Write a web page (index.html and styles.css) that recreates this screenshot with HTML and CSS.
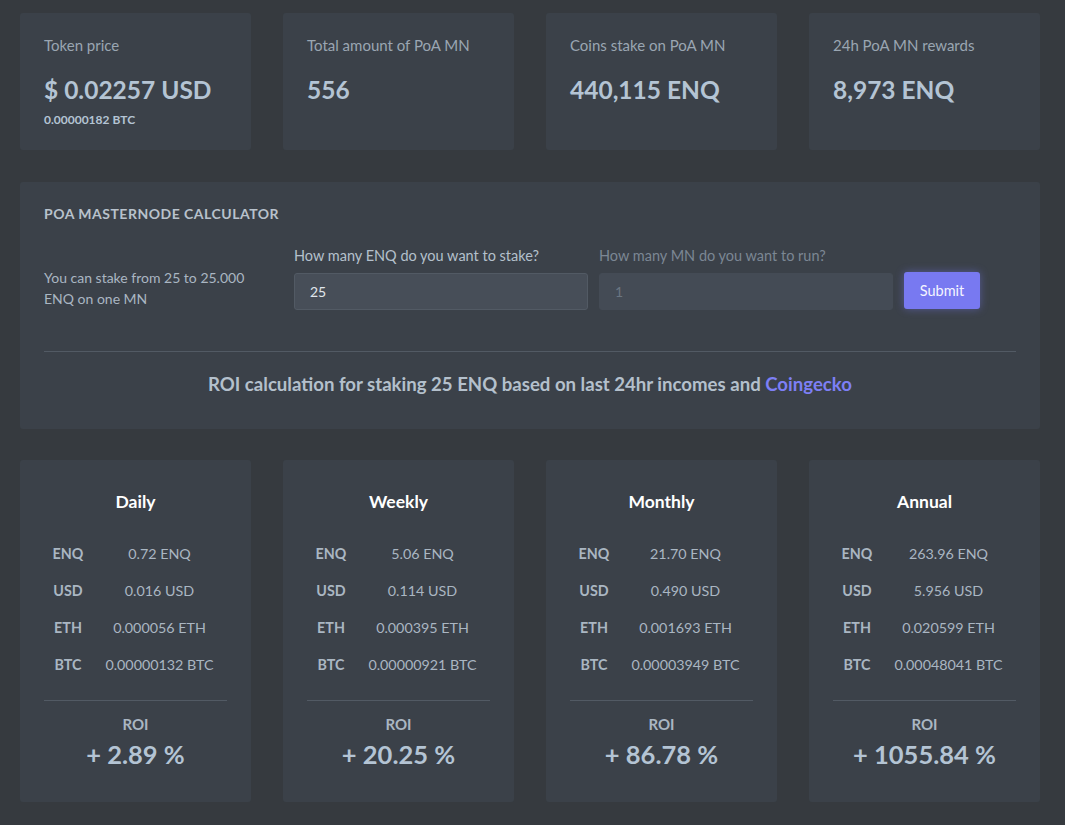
FILE: index.html
```html
<!DOCTYPE html>
<html>
<head>
<meta charset="utf-8">
<link rel="stylesheet" href="styles.css">
</head>
<body>
<div class="wrap">
  <div class="grid4 stats">
    <div class="card stat">
      <div class="stat-label">Token price</div>
      <div class="stat-value">$ 0.02257 USD</div>
      <div class="stat-sub">0.00000182 BTC</div>
    </div>
    <div class="card stat">
      <div class="stat-label">Total amount of PoA MN</div>
      <div class="stat-value">556</div>
    </div>
    <div class="card stat">
      <div class="stat-label">Coins stake on PoA MN</div>
      <div class="stat-value">440,115 ENQ</div>
    </div>
    <div class="card stat">
      <div class="stat-label">24h PoA MN rewards</div>
      <div class="stat-value">8,973 ENQ</div>
    </div>
  </div>

  <div class="card calc">
    <div class="calc-title">POA MASTERNODE CALCULATOR</div>
    <div class="calc-row">
      <div class="calc-note">You can stake from 25 to 25.000 ENQ on one MN</div>
      <div class="field">
        <label class="field-label">How many ENQ do you want to stake?</label>
        <div class="input">25</div>
      </div>
      <div class="field">
        <label class="field-label disabled">How many MN do you want to run?</label>
        <div class="input disabled">1</div>
      </div>
      <button class="btn">Submit</button>
    </div>
    <div class="hr"></div>
    <div class="calc-roi">ROI calculation for staking 25 ENQ based on last 24hr incomes and <a class="link">Coingecko</a></div>
  </div>

  <div class="grid4 periods">
    <div class="card period">
      <div class="period-title">Daily</div>
      <div class="rows">
        <div class="row"><span class="k">ENQ</span><span class="v">0.72 ENQ</span></div>
        <div class="row"><span class="k">USD</span><span class="v">0.016 USD</span></div>
        <div class="row"><span class="k">ETH</span><span class="v">0.000056 ETH</span></div>
        <div class="row"><span class="k">BTC</span><span class="v">0.00000132 BTC</span></div>
      </div>
      <div class="hr"></div>
      <div class="roi-label">ROI</div>
      <div class="roi-value">+ 2.89 %</div>
    </div>
    <div class="card period">
      <div class="period-title">Weekly</div>
      <div class="rows">
        <div class="row"><span class="k">ENQ</span><span class="v">5.06 ENQ</span></div>
        <div class="row"><span class="k">USD</span><span class="v">0.114 USD</span></div>
        <div class="row"><span class="k">ETH</span><span class="v">0.000395 ETH</span></div>
        <div class="row"><span class="k">BTC</span><span class="v">0.00000921 BTC</span></div>
      </div>
      <div class="hr"></div>
      <div class="roi-label">ROI</div>
      <div class="roi-value">+ 20.25 %</div>
    </div>
    <div class="card period">
      <div class="period-title">Monthly</div>
      <div class="rows">
        <div class="row"><span class="k">ENQ</span><span class="v">21.70 ENQ</span></div>
        <div class="row"><span class="k">USD</span><span class="v">0.490 USD</span></div>
        <div class="row"><span class="k">ETH</span><span class="v">0.001693 ETH</span></div>
        <div class="row"><span class="k">BTC</span><span class="v">0.00003949 BTC</span></div>
      </div>
      <div class="hr"></div>
      <div class="roi-label">ROI</div>
      <div class="roi-value">+ 86.78 %</div>
    </div>
    <div class="card period">
      <div class="period-title">Annual</div>
      <div class="rows">
        <div class="row"><span class="k">ENQ</span><span class="v">263.96 ENQ</span></div>
        <div class="row"><span class="k">USD</span><span class="v">5.956 USD</span></div>
        <div class="row"><span class="k">ETH</span><span class="v">0.020599 ETH</span></div>
        <div class="row"><span class="k">BTC</span><span class="v">0.00048041 BTC</span></div>
      </div>
      <div class="hr"></div>
      <div class="roi-label">ROI</div>
      <div class="roi-value">+ 1055.84 %</div>
    </div>
  </div>
</div>
</body>
</html>
```

FILE: styles.css
```css
* { box-sizing: border-box; }
html, body { margin: 0; padding: 0; }
body {
  background: #363a3f;
  font-family: Lato, "Noto Sans", sans-serif;
  color: #b8c4d0;
  width: 1065px;
  height: 825px;
  overflow: hidden;
}
.wrap {
  padding: 13px 25px 0 20px;
  display: flex;
  flex-direction: column;
  gap: 32px;
}
.grid4 {
  display: grid;
  grid-template-columns: repeat(4, 1fr);
  gap: 32px;
}
.card {
  background: #3b4149;
  border-radius: 3px;
}
.stat {
  height: 137px;
  padding: 23px 24px;
}
.stat-label {
  font-size: 15px;
  color: #9aa6b2;
  line-height: 18px;
}
.stat-value {
  margin-top: 21px;
  font-size: 24.5px;
  font-weight: 700;
  color: #b4c4d4;
  line-height: 29px;
}
.stat-sub {
  margin-top: 8px;
  font-size: 12px;
  font-weight: 700;
  color: #b4c4d4;
}
.calc {
  height: 247px;
  padding: 23px 24px 0 24px;
  display: flex;
  flex-direction: column;
}
.calc-title {
  font-size: 14px;
  font-weight: 700;
  color: #b8c2cc;
  letter-spacing: 0.5px;
}
.calc-row {
  margin-top: 25px;
  display: flex;
  align-items: flex-end;
  gap: 11px;
}
.calc-note {
  width: 239px;
  padding-right: 10px;
  font-size: 14px;
  line-height: 21px;
  color: #aab6c2;
  padding-bottom: 1px;
}
.field {
  width: 294px;
  display: flex;
  flex-direction: column;
  gap: 9px;
}
.field-label {
  font-size: 14.5px;
  color: #b4c0cc;
  line-height: 17px;
}
.field-label.disabled { color: #7b8794; }
.input {
  height: 37px;
  background: #474e58;
  border: 1px solid #525a64;
  border-radius: 3px;
  font-size: 14px;
  color: #e0e6ec;
  padding: 9px 0 0 15px;
}
.input.disabled {
  background: #444b55;
  border-color: #444b55;
  color: #6b7682;
}
.btn {
  width: 76px;
  height: 37px;
  background: #7879f1;
  border: none;
  border-radius: 3px;
  color: #f4f4ff;
  font-family: inherit;
  font-size: 14.5px;
  box-shadow: 0 0 8px rgba(120, 121, 241, 0.45);
  margin-bottom: 1px;
}
.hr {
  height: 1px;
  background: #525a64;
}
.calc .hr { margin-top: 41px; }
.calc-roi {
  margin-top: 21px;
  text-align: center;
  font-size: 18.6px;
  font-weight: 700;
  color: #b4c0cc;
}
.link { color: #7d7ff5; }
.periods { margin-top: -1px; }
.period {
  height: 342px;
  padding: 31px 24px 0 24px;
  display: flex;
  flex-direction: column;
}
.period-title {
  text-align: center;
  font-size: 17.5px;
  font-weight: 700;
  color: #ffffff;
  line-height: 22px;
}
.rows {
  margin-top: 22px;
  display: flex;
  flex-direction: column;
}
.row {
  display: grid;
  grid-template-columns: 48px 1fr;
  height: 37px;
  align-items: center;
  font-size: 14.3px;
}
.k {
  font-weight: 700;
  color: #aab6c2;
  text-align: center;
}
.v {
  text-align: center;
  color: #aab6c2;
}
.period .hr { margin-top: 17px; }
.roi-label {
  margin-top: 14px;
  text-align: center;
  font-size: 15px;
  font-weight: 700;
  color: #aab6c2;
}
.roi-value {
  margin-top: 6px;
  text-align: center;
  font-size: 25.5px;
  font-weight: 700;
  color: #b4c4d4;
}
```
